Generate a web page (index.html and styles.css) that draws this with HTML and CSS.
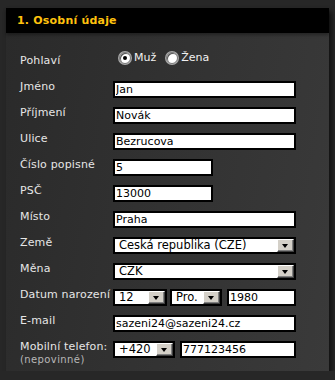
FILE: index.html
```html
<!DOCTYPE html>
<html lang="cs">
<head>
    <meta charset="UTF-8">
    <title>Osobní údaje</title>
    <link rel="stylesheet" href="styles.css">
</head>
<body>
    <div class="panel">
        <h2 class="panel-title">1. Osobní údaje</h2>
        <form class="form">
            <div class="row">
                <label>Pohlaví</label>
                <div class="radios">
                    <span class="radio checked"></span><span class="radio-label">Muž</span>
                    <span class="radio"></span><span class="radio-label">Žena</span>
                </div>
            </div>
            <div class="row">
                <label>Jméno</label>
                <input class="field wide" type="text" value="Jan">
            </div>
            <div class="row">
                <label>Příjmení</label>
                <input class="field wide" type="text" value="Novák">
            </div>
            <div class="row">
                <label>Ulice</label>
                <input class="field wide" type="text" value="Bezrucova">
            </div>
            <div class="row">
                <label>Číslo popisné</label>
                <input class="field short" type="text" value="5">
            </div>
            <div class="row">
                <label>PSČ</label>
                <input class="field short" type="text" value="13000">
            </div>
            <div class="row">
                <label>Místo</label>
                <input class="field wide" type="text" value="Praha">
            </div>
            <div class="row">
                <label>Země</label>
                <div class="select wide"><span class="value">Česká republika (CZE)</span><span class="arrow"></span></div>
            </div>
            <div class="row">
                <label>Měna</label>
                <div class="select wide"><span class="value">CZK</span><span class="arrow"></span></div>
            </div>
            <div class="row">
                <label>Datum narození</label>
                <div class="group">
                    <div class="select day"><span class="value">12</span><span class="arrow"></span></div>
                    <div class="select month"><span class="value">Pro.</span><span class="arrow"></span></div>
                    <input class="field year" type="text" value="1980">
                </div>
            </div>
            <div class="row">
                <label>E-mail</label>
                <input class="field wide" type="text" value="sazeni24@sazeni24.cz">
            </div>
            <div class="row last">
                <label>Mobilní telefon:<small>(nepovinné)</small></label>
                <div class="group">
                    <div class="select prefix"><span class="value">+420</span><span class="arrow"></span></div>
                    <input class="field phone" type="text" value="777123456">
                </div>
            </div>
        </form>
    </div>
</body>
</html>
```

FILE: styles.css
```css
body {
    background-color: #272727;
    font-family: 'DejaVu Sans', Verdana, sans-serif;
    font-size: 11px;
    color: #e6e6e6;
    margin: 0;
    padding: 8px 6px 0 6px;
}

.panel {
    width: 323px;
    height: 363px;
    background: linear-gradient(100deg, #2a2a2a 0%, #333 55%, #3a3a3a 100%);
    box-shadow: 3px 4px 5px rgba(0, 0, 0, 0.55);
}

.panel-title {
    margin: 0;
    height: 25px;
    line-height: 25px;
    padding-left: 11px;
    background-color: #000;
    color: #ffc20e;
    font-size: 11px;
    font-weight: bold;
    letter-spacing: 0.2px;
    box-shadow: 0 2px 3px rgba(0, 0, 0, 0.35);
}

.form {
    padding: 21px 0 0 14px;
}

.row {
    display: grid;
    grid-template-columns: 93px auto;
    align-items: start;
    height: 26px;
}

.row label {
    line-height: 13px;
    letter-spacing: 0.15px;
}

.row small {
    display: block;
    font-size: 10px;
    color: #b8b8b8;
    letter-spacing: 0.4px;
}

.radios {
    display: flex;
    align-items: center;
    margin-top: -3px;
    padding-left: 6px;
}

.radio {
    width: 10px;
    height: 10px;
    border-radius: 50%;
    background: #fff;
    border: 1px solid #777;
    box-shadow: inset 1px 1px 0 #555, 0 0 0 1px #aaa;
    position: relative;
}

.radio.checked::after {
    content: "";
    position: absolute;
    left: 3px;
    top: 3px;
    width: 4px;
    height: 4px;
    border-radius: 50%;
    background: #000;
}

.radio-label {
    margin: 0 10px 0 3px;
    color: #f0f0f0;
}

.field,
.select {
    box-sizing: border-box;
    height: 17px;
    border: 2px solid #000;
    background: #fff;
    color: #000;
    margin: 1px 0 0 0;
}

.field {
    font-family: 'DejaVu Sans', Verdana, sans-serif;
    font-size: 11px;
    padding: 0 0 0 1px;
    outline: none;
}

.select {
    display: flex;
    align-items: stretch;
    font-size: 11.5px;
    padding-left: 4px;
}

.select .value {
    flex: 1;
    line-height: 13px;
    white-space: nowrap;
    overflow: hidden;
}

.select .arrow {
    box-sizing: border-box;
    width: 17px;
    height: 13px;
    background: #d4d0c8;
    border: 1px solid;
    border-color: #fff #404040 #404040 #fff;
    box-shadow: inset -1px -1px 0 #808080;
    position: relative;
}

.select .arrow::after {
    content: "";
    position: absolute;
    left: 4px;
    top: 4px;
    border-left: 3.5px solid transparent;
    border-right: 3.5px solid transparent;
    border-top: 4px solid #000;
}

.wide {
    width: 183px;
}

.short {
    width: 100px;
}

.group {
    display: flex;
}

.day {
    width: 54px;
}

.month {
    width: 52px;
    margin-left: 3px;
}

.year {
    width: 69px;
    margin-left: 5px;
}

.prefix {
    width: 62px;
}

.phone {
    width: 116px;
    margin-left: 5px;
}
```
